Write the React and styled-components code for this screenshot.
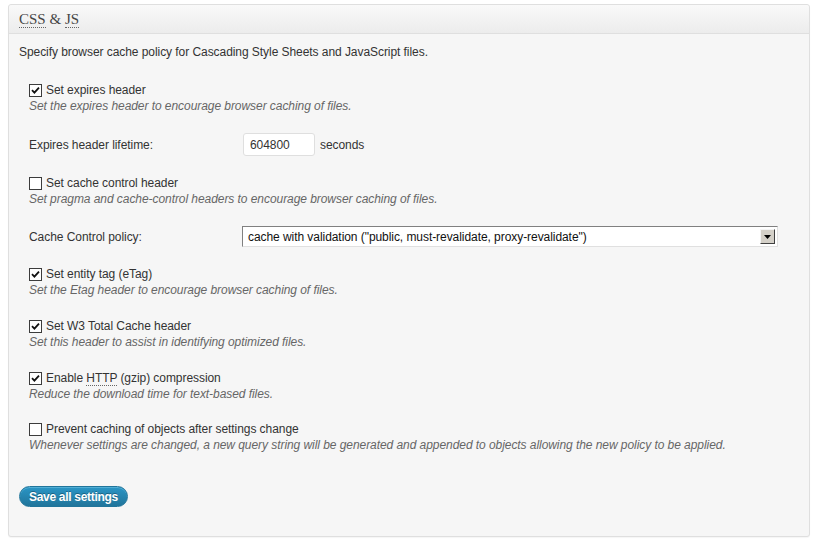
import React from "react";
import styled, { createGlobalStyle } from "styled-components";

const Global = createGlobalStyle`
  html, body { margin: 0; padding: 0; background: #ffffff; }
  body { font-family: "Liberation Sans", Arial, sans-serif; font-size: 12px; color: #333; letter-spacing: -0.06px; }
`;

const Page = styled.div`
  padding: 4px 10px 6px 8px;
`;

const Panel = styled.div`
  border: 1px solid #dfdfdf;
  border-radius: 3px;
  background: #f6f6f6;
  box-shadow: 0 1px 1px rgba(0,0,0,0.04);
`;

const Header = styled.div`
  height: 28px;
  border-bottom: 1px solid #dfdfdf;
  background: linear-gradient(to bottom, #f9f9f9, #ececec);
  display: flex;
  align-items: center;
  padding: 0 10px;
  border-radius: 3px 3px 0 0;
`;

const Title = styled.h3`
  margin: 0;
  font-family: "Liberation Serif", Georgia, serif;
  font-weight: normal;
  font-size: 15px;
  color: #464646;
  letter-spacing: 0;
`;

const Abbr = styled.abbr`
  text-decoration: none;
  border-bottom: 1px dotted #666;
`;

const Body = styled.div`
  padding: 10px 10px 29px 10px;
`;

const Intro = styled.p`
  margin: 0 0 22px;
  line-height: 16px;
  color: #333;
`;

const List = styled.div`
  display: flex;
  flex-direction: column;
  gap: 19px;
  padding-left: 10px;
`;

const CheckItem = styled.div`
  display: flex;
  flex-direction: column;
  margin-top: ${(p) => p.$extra || 0}px;
`;

const CheckLabel = styled.label`
  display: flex;
  align-items: center;
  gap: 4px;
  line-height: 16px;
  color: #333;
`;

const Box = styled.span`
  width: 11px;
  height: 11px;
  border: 1px solid #3c3c3c;
  background: #fff;
  display: inline-flex;
  align-items: center;
  justify-content: center;
  flex: none;
`;

const Desc = styled.span`
  font-style: italic;
  color: #666;
  line-height: 16px;
`;

const FieldRow = styled.div`
  display: flex;
  align-items: center;
  height: ${(p) => p.h}px;
`;

const FieldLabel = styled.span`
  width: 214px;
  flex: none;
  color: #333;
`;

const TextInput = styled.div`
  width: 64px;
  height: 21px;
  border: 1px solid #dfdfdf;
  border-radius: 3px;
  background: #fff;
  display: flex;
  align-items: center;
  padding-left: 6px;
  color: #333;
`;

const Unit = styled.span`
  margin-left: 5px;
  color: #333;
`;

const Select = styled.div`
  margin-left: -1px;
  width: 534px;
  height: 19px;
  border: 1px solid;
  border-color: #808080 #e0e0e0 #e0e0e0 #808080;
  background: #fff;
  display: flex;
  align-items: center;
`;

const SelectText = styled.span`
  flex: 1;
  padding-left: 5px;
  color: #111;
`;

const Arrow = styled.span`
  width: 15px;
  height: 15px;
  margin-right: 2px;
  background: #d4d0c8;
  border: 1px solid;
  border-color: #f4f4f4 #404040 #404040 #f4f4f4;
  box-sizing: border-box;
  display: flex;
  align-items: center;
  justify-content: center;
`;

const Button = styled.button`
  margin-top: 33px;
  height: 21px;
  padding: 0 9px;
  border: 1px solid #21759b;
  border-radius: 11px;
  background: linear-gradient(to bottom, #2a95c5, #21759b);
  color: #fff;
  font-family: "Liberation Sans", Arial, sans-serif;
  font-weight: bold;
  font-size: 12px;
  letter-spacing: -0.3px;
  text-shadow: 0 -1px 0 rgba(0,0,0,0.3);
  box-shadow: inset 0 1px 0 rgba(120,200,230,0.5);
  cursor: pointer;
`;

function Check({ checked }) {
  return (
    <Box>
      {checked && (
        <svg width="9" height="9" viewBox="0 0 9 9">
          <path d="M1 4.2 L3.4 6.6 L8 1.6" stroke="#111" strokeWidth="1.8" fill="none" />
        </svg>
      )}
    </Box>
  );
}

function CheckBlock({ checked, label, desc, extra }) {
  return (
    <CheckItem $extra={extra}>
      <CheckLabel>
        <Check checked={checked} />
        <span>{label}</span>
      </CheckLabel>
      <Desc>{desc}</Desc>
    </CheckItem>
  );
}

export default function App() {
  return (
    <Page>
      <Global />
      <Panel>
        <Header>
          <Title>
            <Abbr title="Cascading Style Sheets">CSS</Abbr> &amp; <Abbr title="JavaScript">JS</Abbr>
          </Title>
        </Header>
        <Body>
          <Intro>Specify browser cache policy for Cascading Style Sheets and JavaScript files.</Intro>
          <List>
            <CheckBlock checked label="Set expires header" desc="Set the expires header to encourage browser caching of files." />
            <FieldRow h={23}>
              <FieldLabel>Expires header lifetime:</FieldLabel>
              <TextInput>604800</TextInput>
              <Unit>seconds</Unit>
            </FieldRow>
            <CheckBlock label="Set cache control header" desc="Set pragma and cache-control headers to encourage browser caching of files." />
            <FieldRow h={21}>
              <FieldLabel>Cache Control policy:</FieldLabel>
              <Select>
                <SelectText>cache with validation ("public, must-revalidate, proxy-revalidate")</SelectText>
                <Arrow>
                  <svg width="7" height="4" viewBox="0 0 7 4">
                    <path d="M0 0 H7 L3.5 4 Z" fill="#000" />
                  </svg>
                </Arrow>
              </Select>
            </FieldRow>
            <CheckBlock checked label="Set entity tag (eTag)" desc="Set the Etag header to encourage browser caching of files." />
            <CheckBlock checked extra={1} label="Set W3 Total Cache header" desc="Set this header to assist in identifying optimized files." />
            <CheckBlock
              checked
              extra={1}
              label={<>Enable <Abbr title="Hypertext Transfer Protocol">HTTP</Abbr> (gzip) compression</>}
              desc="Reduce the download time for text-based files."
            />
            <CheckBlock
              label="Prevent caching of objects after settings change"
              desc="Whenever settings are changed, a new query string will be generated and appended to objects allowing the new policy to be applied."
            />
          </List>
          <Button>Save all settings</Button>
        </Body>
      </Panel>
    </Page>
  );
}
